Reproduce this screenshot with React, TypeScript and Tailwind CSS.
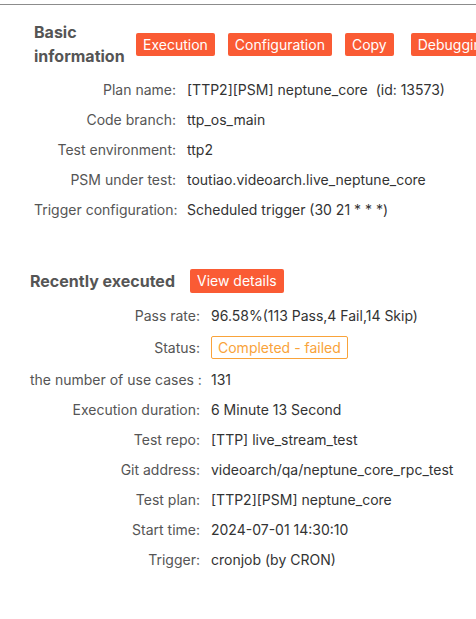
import React from 'react';

const basicRows: [string, string][] = [
  ['Plan name:', '[TTP2][PSM] neptune_core\u00a0\u00a0(id: 13573)'],
  ['Code branch:', 'ttp_os_main'],
  ['Test environment:', 'ttp2'],
  ['PSM under test:', 'toutiao.videoarch.live_neptune_core'],
  ['Trigger configuration:', 'Scheduled trigger (30 21 * * *)'],
];

const recentRows: [string, string][] = [
  ['Execution duration:', '6 Minute 13 Second'],
  ['Test repo:', '[TTP] live_stream_test'],
  ['Git address:', 'videoarch/qa/neptune_core_rpc_test'],
  ['Test plan:', '[TTP2][PSM] neptune_core'],
  ['Start time:', '2024-07-01 14:30:10'],
  ['Trigger:', 'cronjob (by CRON)'],
];

const Btn = ({ children, className = '' }: { children: React.ReactNode; className?: string }) => (
  <button
    className={`h-[23px] shrink-0 whitespace-nowrap rounded-[2px] bg-[#fa5b34] px-[7px] text-[14px] leading-[23px] text-white ${className}`}
  >
    {children}
  </button>
);

const Row = ({ label, value, labelW, h = 'h-[30px]' }: { label: string; value: React.ReactNode; labelW: string; h?: string }) => (
  <div className={`flex items-center ${h}`}>
    <div className={`${labelW} shrink-0 whitespace-nowrap text-right text-[#555]`}>{label}</div>
    <div className="ml-[11px] whitespace-nowrap text-[#333]">{value}</div>
  </div>
);

export default function App() {
  return (
    <div
      className="h-[619px] w-[476px] overflow-hidden bg-white pt-[4px] text-[14px]"
      style={{ fontFamily: 'Inter, "Liberation Sans", sans-serif' }}
    >
      <div className="border-t border-[#8c8c8c]" />

      {/* Basic information */}
      <div className="pl-[34px] pt-[15px]">
        <div className="flex h-[48px] items-center">
          <h2 className="w-[102px] shrink-0 text-[16px] font-bold leading-[24px] text-[#555]">
            Basic
            <br />
            information
          </h2>
          <Btn>Execution</Btn>
          <Btn className="ml-[13px]">Configuration</Btn>
          <Btn className="ml-[13px]">Copy</Btn>
          <Btn className="ml-[17px]">Debugging</Btn>
        </div>
        <div className="mt-[6px]">
          {basicRows.map(([l, v]) => (
            <Row key={l} label={l} value={v} labelW="w-[142px]" />
          ))}
        </div>
      </div>

      {/* Recently executed */}
      <div className="mt-[45px] pl-[30px]">
        <div className="flex h-[24px] items-center">
          <h2 className="text-[16px] font-bold text-[#555]">Recently executed</h2>
          <Btn className="ml-[15px] h-[24px] leading-[24px]">View details</Btn>
        </div>
        <div className="mt-[7px]">
          <Row label="Pass rate:" value="96.58%(113 Pass,4 Fail,14 Skip)" labelW="w-[170px]" />
          <Row
            label="Status:"
            h="h-[34px]"
            labelW="w-[170px]"
            value={
              <span className="inline-block h-[23px] rounded-[2px] border border-[#f9a33a] px-[6px] leading-[21px] text-[#f9a33a]">
                Completed - failed
              </span>
            }
          />
          <Row label="the number of use cases :" value="131" labelW="w-[170px]" />
          {recentRows.map(([l, v]) => (
            <Row key={l} label={l} value={v} labelW="w-[170px]" />
          ))}
        </div>
      </div>
    </div>
  );
}
